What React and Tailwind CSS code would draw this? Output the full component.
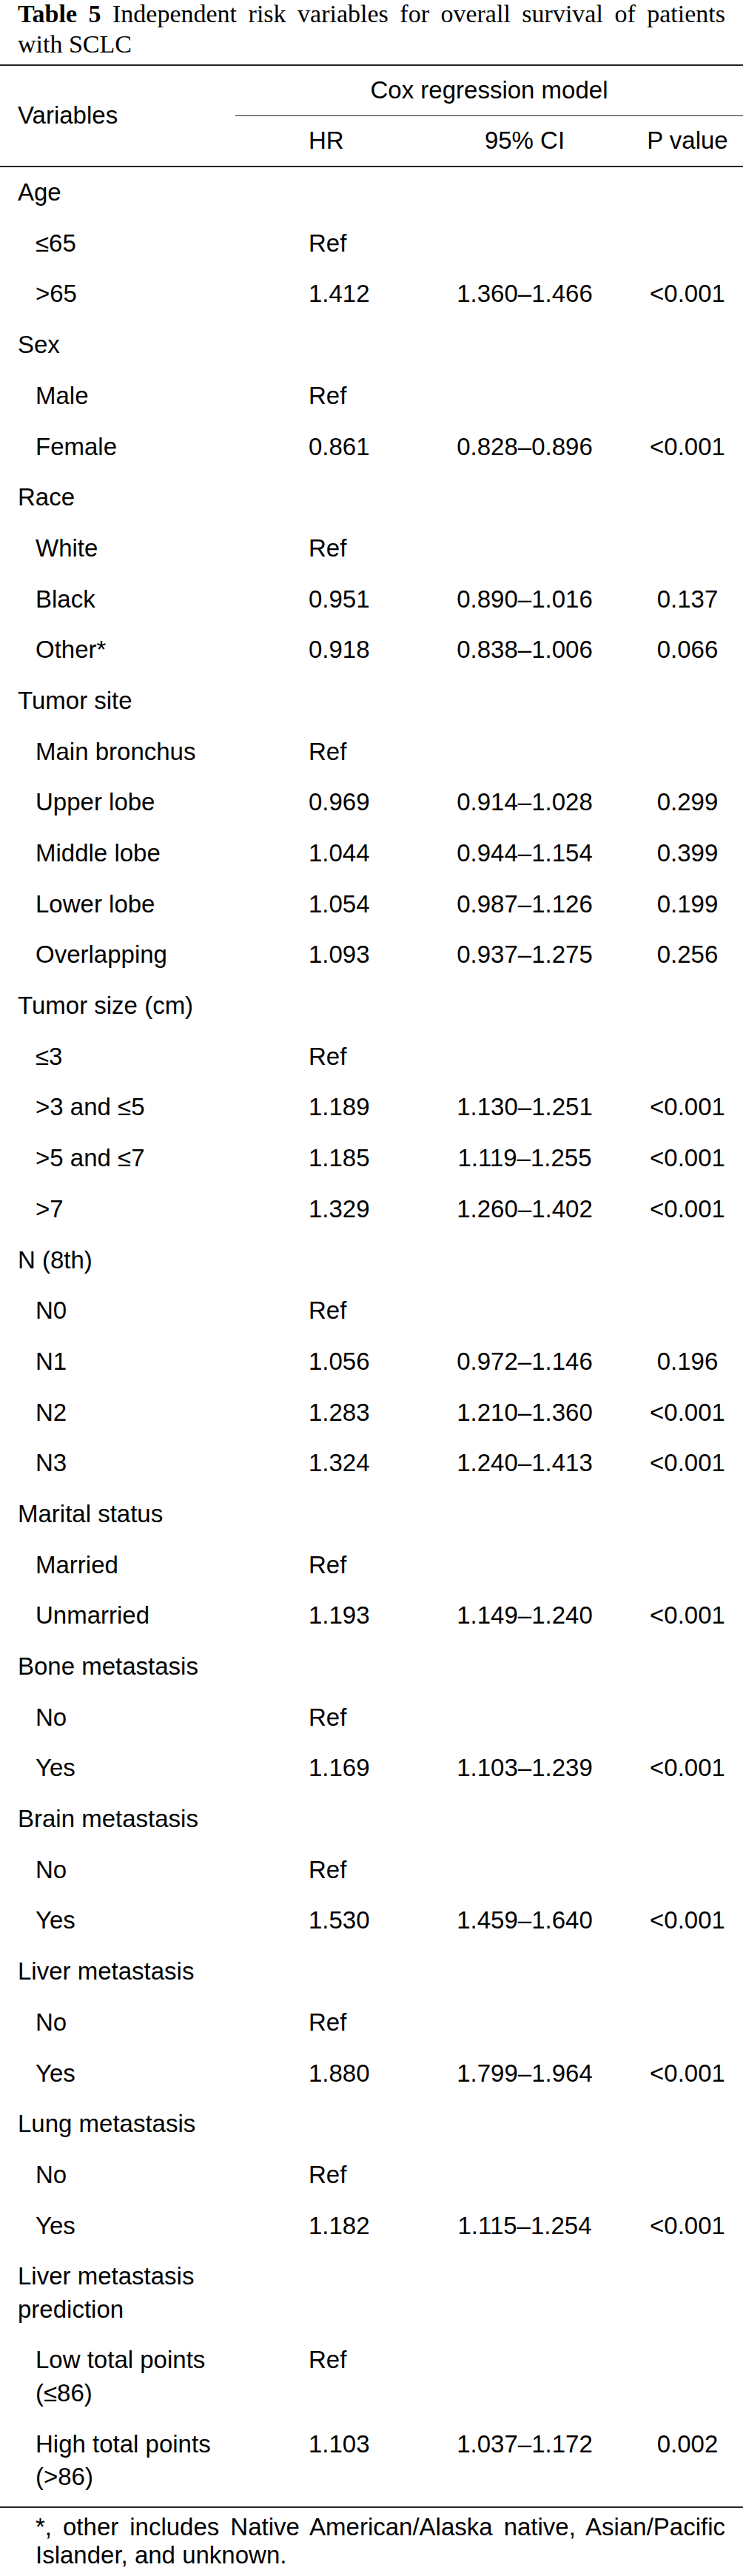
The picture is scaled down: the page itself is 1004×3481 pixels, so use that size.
import React from "react";

const rows = [
  { l: "Age", h: true },
  { l: "≤65", hr: "Ref" },
  { l: ">65", hr: "1.412", ci: "1.360–1.466", p: "<0.001" },
  { l: "Sex", h: true },
  { l: "Male", hr: "Ref" },
  { l: "Female", hr: "0.861", ci: "0.828–0.896", p: "<0.001" },
  { l: "Race", h: true },
  { l: "White", hr: "Ref" },
  { l: "Black", hr: "0.951", ci: "0.890–1.016", p: "0.137" },
  { l: "Other*", hr: "0.918", ci: "0.838–1.006", p: "0.066" },
  { l: "Tumor site", h: true },
  { l: "Main bronchus", hr: "Ref" },
  { l: "Upper lobe", hr: "0.969", ci: "0.914–1.028", p: "0.299" },
  { l: "Middle lobe", hr: "1.044", ci: "0.944–1.154", p: "0.399" },
  { l: "Lower lobe", hr: "1.054", ci: "0.987–1.126", p: "0.199" },
  { l: "Overlapping", hr: "1.093", ci: "0.937–1.275", p: "0.256" },
  { l: "Tumor size (cm)", h: true },
  { l: "≤3", hr: "Ref" },
  { l: ">3 and ≤5", hr: "1.189", ci: "1.130–1.251", p: "<0.001" },
  { l: ">5 and ≤7", hr: "1.185", ci: "1.119–1.255", p: "<0.001" },
  { l: ">7", hr: "1.329", ci: "1.260–1.402", p: "<0.001" },
  { l: "N (8th)", h: true },
  { l: "N0", hr: "Ref" },
  { l: "N1", hr: "1.056", ci: "0.972–1.146", p: "0.196" },
  { l: "N2", hr: "1.283", ci: "1.210–1.360", p: "<0.001" },
  { l: "N3", hr: "1.324", ci: "1.240–1.413", p: "<0.001" },
  { l: "Marital status", h: true },
  { l: "Married", hr: "Ref" },
  { l: "Unmarried", hr: "1.193", ci: "1.149–1.240", p: "<0.001" },
  { l: "Bone metastasis", h: true },
  { l: "No", hr: "Ref" },
  { l: "Yes", hr: "1.169", ci: "1.103–1.239", p: "<0.001" },
  { l: "Brain metastasis", h: true },
  { l: "No", hr: "Ref" },
  { l: "Yes", hr: "1.530", ci: "1.459–1.640", p: "<0.001" },
  { l: "Liver metastasis", h: true },
  { l: "No", hr: "Ref" },
  { l: "Yes", hr: "1.880", ci: "1.799–1.964", p: "<0.001" },
  { l: "Lung metastasis", h: true },
  { l: "No", hr: "Ref" },
  { l: "Yes", hr: "1.182", ci: "1.115–1.254", p: "<0.001" },
  { l: "Liver metastasis prediction", h: true },
  { l: "Low total points (≤86)", hr: "Ref" },
  { l: "High total points (>86)", hr: "1.103", ci: "1.037–1.172", p: "0.002", last: true },
];

function Row({ r }) {
  return (
    <div
      className={
        "grid grid-cols-[318px_282px_218px_186px] leading-[44.5px] pt-[12.1px] " +
        (r.last ? "pb-[17px]" : "pb-[12.1px]")
      }
    >
      <div className={r.h ? "pl-[24px] pr-[6px]" : "pl-[48px] pr-[24px]"}>{r.l}</div>
      <div className="pl-[99px] text-left">{r.hr || ""}</div>
      <div className="text-center">{r.ci || ""}</div>
      <div className="pl-[36px] text-center">{r.p || ""}</div>
    </div>
  );
}

export default function App() {
  return (
    <div className="w-[1004px] min-h-[3481px] bg-white text-black font-['Liberation_Sans',Arial,sans-serif] text-[33px] overflow-hidden">
      <div className="font-['Liberation_Serif','Times_New_Roman',serif] text-[34px] px-[24px] mb-[5px]">
        <div className="leading-[38px] text-justify [text-align-last:justify]">
          <b>Table 5</b> Independent risk variables for overall survival of patients
        </div>
        <div className="leading-[45px] -mt-[1px]">with SCLC</div>
      </div>
      <div className="border-t-2 border-b-2 border-[#262626] flex">
        <div className="w-[318px] shrink-0 flex items-center pl-[24px] leading-[44.5px]">Variables</div>
        <div className="flex-1 flex flex-col">
          <div className="text-center leading-[44.5px] py-[11px] border-b-[1.5px] border-[#262626]">
            Cox regression model
          </div>
          <div className="grid grid-cols-[282px_218px_186px] leading-[44.5px] py-[11.5px]">
            <div className="pl-[99px]">HR</div>
            <div className="text-center">95% CI</div>
            <div className="pl-[36px] text-center">P value</div>
          </div>
        </div>
      </div>
      <div className="border-b-2 border-[#262626]">
        {rows.map((r, i) => (
          <Row key={i} r={r} />
        ))}
      </div>
      <p className="pl-[48px] pr-[24px] pt-[7px] leading-[38px] text-justify">
        *, other includes Native American/Alaska native, Asian/Pacific Islander, and unknown.
      </p>
    </div>
  );
}
